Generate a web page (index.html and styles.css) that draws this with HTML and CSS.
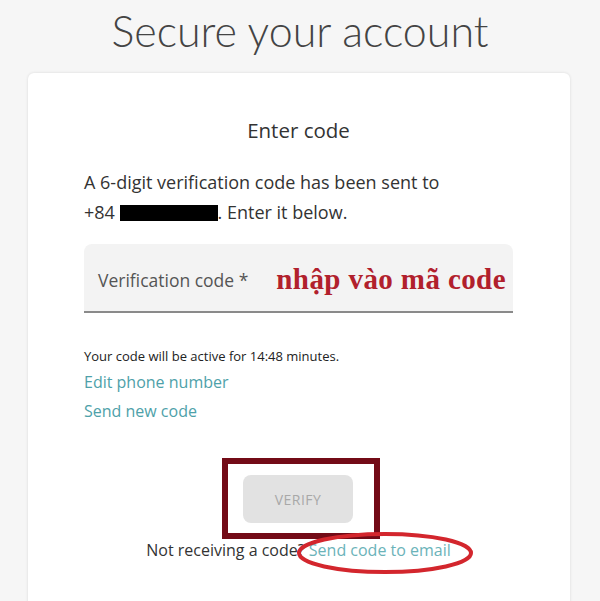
FILE: index.html
```html
<!DOCTYPE html>
<html lang="en">
<head>
    <meta charset="UTF-8">
    <meta name="viewport" content="width=device-width, initial-scale=1.0">
    <title>Secure your account</title>
    <link rel="stylesheet" href="styles.css">
</head>
<body>

    <h1 class="page-title">Secure your account</h1>

    <div class="card">
        <h2 class="card-title">Enter code</h2>
        <p class="intro">A 6-digit verification code has been sent to<br>+84 <span class="redact"></span>. Enter it below.</p>

        <div class="field">
            <span class="field-label">Verification code *</span>
            <span class="note">nhập vào mã code</span>
        </div>

        <p class="timer">Your code will be active for 14:48 minutes.</p>
        <a class="link" href="#">Edit phone number</a>
        <a class="link" href="#">Send new code</a>

        <div class="verify-box">
            <button class="verify" disabled>VERIFY</button>
        </div>

        <p class="resend">Not receiving a code? <a class="resend-link" href="#">Send code to email</a>
            <svg class="ring" width="180" height="46" viewBox="0 0 180 46">
                <ellipse cx="90" cy="23" rx="86" ry="19" fill="none" stroke="#d3262d" stroke-width="4"/>
            </svg>
        </p>
    </div>

</body>
</html>
```

FILE: styles.css
```css
body {
    margin: 0;
    background: #f6f6f6;
    font-family: "Open Sans", Lato, sans-serif;
    color: #333;
}
.page-title {
    margin: 0;
    padding-top: 8px;
    height: 65px;
    font-family: Lato, sans-serif;
    font-size: 43px;
    line-height: 46px;
    font-weight: 300;
    text-align: center;
    color: #444;
}
.card {
    margin: 0 30px 0 28px;
    background: #fff;
    border-radius: 6px;
    box-shadow: 0 0 3px rgba(0, 0, 0, 0.12);
    padding: 45px 57px 40px 56px;
    height: 600px;
}
.card-title {
    margin: 0 0 25px;
    font-size: 20.5px;
    line-height: 24px;
    font-weight: 400;
    text-align: center;
    color: #333;
}
.intro {
    margin: 0 0 17px;
    font-size: 18px;
    line-height: 30px;
    color: #333;
}
.redact {
    display: inline-block;
    width: 98px;
    height: 16px;
    background: #000;
    vertical-align: -2px;
}
.field {
    height: 69px;
    background: #f3f3f3;
    border-radius: 8px 8px 0 0;
    border-bottom: 2px solid #8a8a8a;
    display: flex;
    align-items: center;
    gap: 28px;
    padding: 4px 0 0 14px;
    box-sizing: border-box;
}
.field-label {
    font-size: 17.5px;
    color: #555;
}
.note {
    font-family: "Liberation Serif", serif;
    font-weight: bold;
    font-size: 29px;
    letter-spacing: 0.4px;
    color: #b1202c;
}
.timer {
    margin: 35px 0 4px;
    font-size: 13px;
    line-height: 16px;
    color: #222;
}
.link {
    display: block;
    font-size: 16px;
    line-height: 29px;
    color: #4ea1a9;
    text-decoration: none;
}
.verify-box {
    width: 110px;
    margin: 32px 0 0 138px;
    border: 6px solid #730b17;
    padding: 11px 21px 10px 15px;
}
.verify {
    display: block;
    width: 110px;
    height: 48px;
    border: none;
    border-radius: 8px;
    background: #e2e2e2;
    color: #a8a8a8;
    font-family: "Open Sans", sans-serif;
    font-size: 14px;
    letter-spacing: 0.5px;
}
.resend {
    position: relative;
    margin: 0;
    font-size: 16px;
    line-height: 22px;
    text-align: center;
    color: #333;
}
.resend-link {
    color: #6bb3b9;
    text-decoration: none;
}
.ring {
    position: absolute;
    left: 211px;
    top: -9px;
}
```
